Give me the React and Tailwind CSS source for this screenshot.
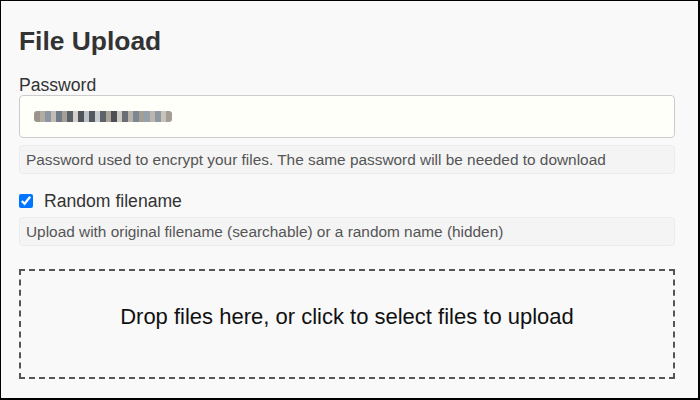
import { useState } from "react";

// blurred (pixelated) saved password, drawn as a row of tiles
const MOSAIC = [
  "bg-[#9b948b]",
  "bg-[#b3aca3]",
  "bg-[#8d97a3]",
  "bg-[#c2bcb3]",
  "bg-[#727c88]",
  "bg-[#a79f95]",
  "bg-[#5b6068]",
  "bg-[#d5d1ca]",
  "bg-[#4f545b]",
  "bg-[#bcc2c7]",
  "bg-[#55595f]",
  "bg-[#c9cdd0]",
  "bg-[#5e636a]",
  "bg-[#a9a39a]",
  "bg-[#4c5056]",
  "bg-[#cfcac2]",
  "bg-[#6a6f76]",
  "bg-[#b9b2a8]",
  "bg-[#7d8792]",
  "bg-[#a59e94]",
  "bg-[#96a0ab]",
  "bg-[#bdb6ad]",
  "bg-[#8f98a2]",
  "bg-[#c8c2ba]",
  "bg-[#a49d93]",
];

export default function App() {
  const [randomName, setRandomName] = useState(true);

  return (
    <div className="w-[700px] h-[400px] overflow-hidden bg-[#f9f9f9] border-t border-l border-r-2 border-b-2 border-black font-['Liberation_Sans',Arial,sans-serif] text-[#333]">
      <div className="pl-[18px] pr-[23px] pt-[25px]">
        <h1 className="text-[26.4px] leading-[30px] font-bold text-[#333]">
          File Upload
        </h1>

        {/* ===== PASSWORD ===== */}
        <label className="block mt-[19px] text-[17.6px] leading-[20px]">
          Password
        </label>
        <div className="flex items-center h-[43px] pl-[14px] bg-[#fffffa] border border-[#cccccc] rounded-[4px]">
          <div className="flex h-[11px] rounded-[3px] overflow-hidden">
            {MOSAIC.map((c, i) => (
              <div key={i} className={`w-[5.5px] h-full ${c}`} />
            ))}
          </div>
        </div>
        <div className="mt-[7px] h-[29px] pl-[6px] pt-[5px] bg-[#f4f4f4] border border-[#ececec] rounded-[4px] text-[15.4px] leading-[17.6px] text-[#555]">
          Password used to encrypt your files. The same password will be needed
          to download
        </div>

        {/* ===== RANDOM NAME ===== */}
        <label className="flex items-center mt-[17px] h-[20px] text-[17.6px] leading-[20px]">
          <input
            type="checkbox"
            checked={randomName}
            onChange={(e) => setRandomName(e.target.checked)}
            className="w-[14px] h-[14px] accent-[#0075ff]"
          />
          <span className="ml-[11px]">Random filename</span>
        </label>
        <div className="mt-[6px] h-[29px] pl-[6px] pt-[5px] bg-[#f4f4f4] border border-[#ececec] rounded-[4px] text-[15.4px] leading-[17.6px] text-[#555]">
          Upload with original filename (searchable) or a random name (hidden)
        </div>

        {/* ===== DROPZONE ===== */}
        <div className="mt-[23px] h-[110px] flex items-center justify-center pb-[16px] border-2 border-dashed border-[#555] cursor-pointer">
          <p className="text-[22px] leading-[25px] text-[#111]">
            Drop files here, or click to select files to upload
          </p>
        </div>
      </div>
    </div>
  );
}
